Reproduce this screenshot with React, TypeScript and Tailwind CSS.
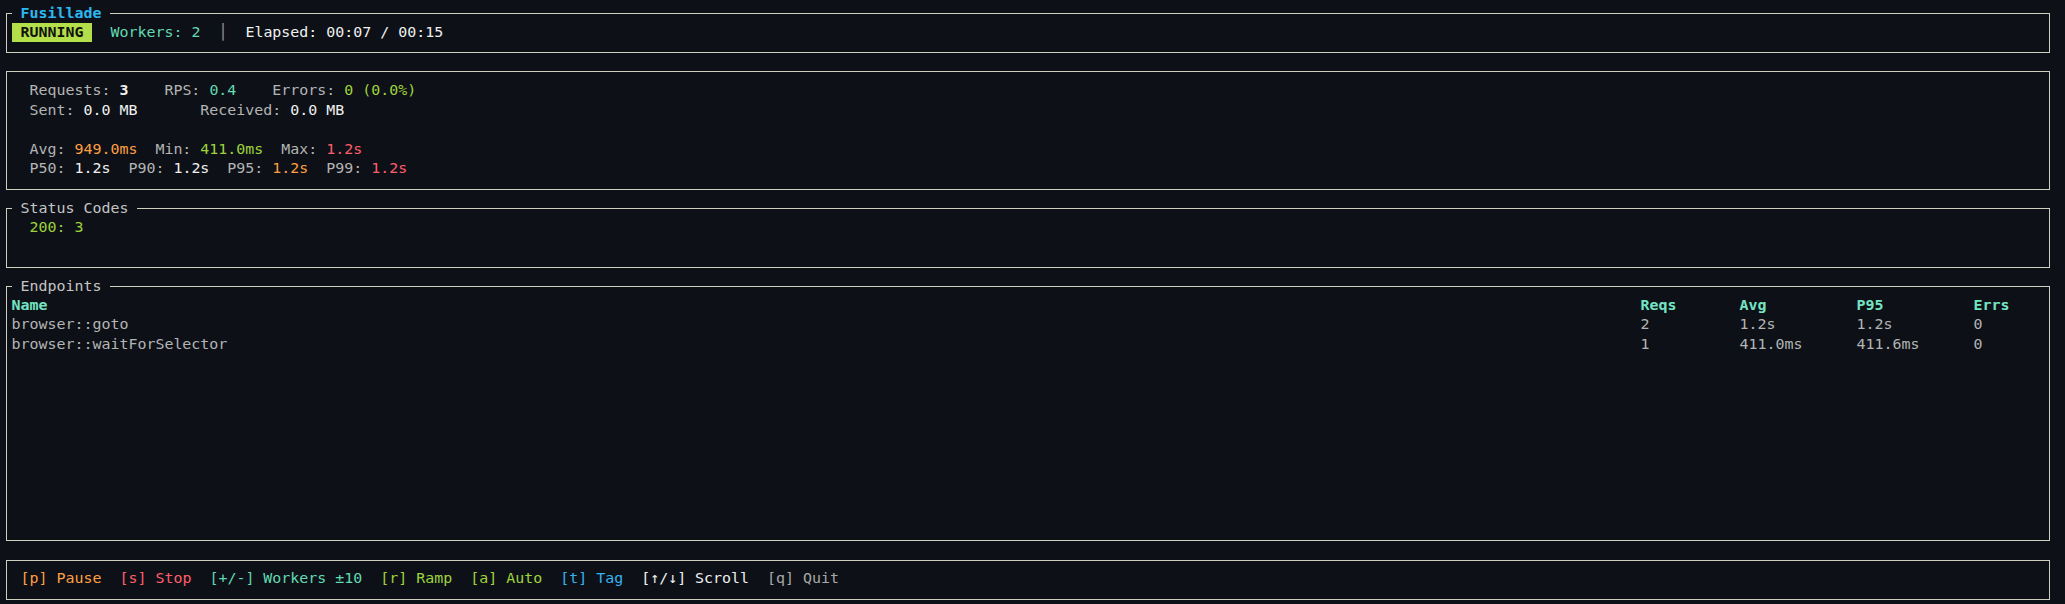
import React from "react";

const ROW = "h-[19.53px] leading-[19.53px] whitespace-pre";

function Box({
  title,
  titleClass,
  heightClass,
  children,
}: {
  title?: string;
  titleClass?: string;
  heightClass: string;
  children?: React.ReactNode;
}) {
  return (
    <div
      className={`relative ml-[6px] w-[2044px] shrink-0 border border-[#cfcfc0] pl-[4.5px] pt-[8.77px] ${heightClass}`}
    >
      {title && (
        <span
          className={`absolute left-[4.5px] top-[-10.27px] h-[19.53px] leading-[19.53px] whitespace-pre bg-[#0d1117] px-[9px] ${titleClass ?? ""}`}
        >
          {title}
        </span>
      )}
      {children}
    </div>
  );
}

const endpoints = [
  { name: "browser::goto", reqs: "2", avg: "1.2s", p95: "1.2s", errs: "0" },
  { name: "browser::waitForSelector", reqs: "1", avg: "411.0ms", p95: "411.6ms", errs: "0" },
];

export default function App() {
  const lbl = "text-[#b4b4b4]";
  const val = "text-[#f0f0f0]";
  const green = "text-[#9fd33c]";
  const orange = "text-[#ff9f43]";
  const red = "text-[#ff5d6a]";
  const teal = "text-[#62d9b2]";
  const blue = "text-[#35b2f0]";
  return (
    <div className="w-[2065px] h-[604px] overflow-hidden bg-[#0d1117] pt-[12.8px] flex flex-col gap-[18.53px] font-['DejaVu_Sans_Mono',monospace] text-[14.95px] text-[#b4b4b4]">
      {/* Header */}
      <Box title="Fusillade" titleClass="font-bold text-[#2db7f2]" heightClass="h-[40.06px]">
        <div className={ROW}>
          <span className="inline-block h-[19.53px] bg-[#b3df4a] font-bold text-[#10130d]"> RUNNING </span>
          <span>  </span>
          <span className={teal}>Workers: 2</span>
          <span>  </span>
          <span className="text-[#9a9a9a]">│</span>
          <span>  </span>
          <span className={val}>Elapsed: 00:07 / 00:15</span>
        </div>
      </Box>

      {/* Stats */}
      <Box heightClass="h-[118.18px]">
        <div className={ROW}>
          <span className={lbl}>  Requests: </span>
          <span className={`${val} font-bold`}>3</span>
          <span className={lbl}>    RPS: </span>
          <span className={teal}>0.4</span>
          <span className={lbl}>    Errors: </span>
          <span className={green}>0 (0.0%)</span>
        </div>
        <div className={ROW}>
          <span className={lbl}>  Sent: </span>
          <span className={val}>0.0 MB</span>
          <span className={lbl}>       Received: </span>
          <span className={val}>0.0 MB</span>
        </div>
        <div className={ROW}> </div>
        <div className={ROW}>
          <span className={lbl}>  Avg: </span>
          <span className={orange}>949.0ms</span>
          <span className={lbl}>  Min: </span>
          <span className={green}>411.0ms</span>
          <span className={lbl}>  Max: </span>
          <span className={red}>1.2s</span>
        </div>
        <div className={ROW}>
          <span className={lbl}>  P50: </span>
          <span className={val}>1.2s</span>
          <span className={lbl}>  P90: </span>
          <span className={val}>1.2s</span>
          <span className={lbl}>  P95: </span>
          <span className={orange}>1.2s</span>
          <span className={lbl}>  P99: </span>
          <span className={red}>1.2s</span>
        </div>
      </Box>

      {/* Status codes */}
      <Box title="Status Codes" titleClass="text-[#c4c4c4]" heightClass="h-[59.59px]">
        <div className={ROW}>
          <span className={green}>  200: 3</span>
        </div>
      </Box>

      {/* Endpoints */}
      <Box title="Endpoints" titleClass="text-[#c4c4c4]" heightClass="h-[254.89px]">
        <div className="grid grid-cols-[1629px_99px_117px_117px_1fr]">
          {["Name", "Reqs", "Avg", "P95", "Errs"].map((h) => (
            <div key={h} className={`${ROW} font-bold text-[#74e4c2]`}>
              {h}
            </div>
          ))}
          {endpoints.map((e) => (
            <React.Fragment key={e.name}>
              <div className={`${ROW} text-[#b4b4b4]`}>{e.name}</div>
              <div className={`${ROW} text-[#b4b4b4]`}>{e.reqs}</div>
              <div className={`${ROW} text-[#b4b4b4]`}>{e.avg}</div>
              <div className={`${ROW} text-[#b4b4b4]`}>{e.p95}</div>
              <div className={`${ROW} text-[#b4b4b4]`}>{e.errs}</div>
            </React.Fragment>
          ))}
        </div>
      </Box>

      {/* Footer */}
      <Box heightClass="h-[40.06px]">
        <div className={ROW}>
          <span> </span>
          <span className={orange}>[p] Pause</span>
          <span>  </span>
          <span className={red}>[s] Stop</span>
          <span>  </span>
          <span className={teal}>[+/-] Workers ±10</span>
          <span>  </span>
          <span className={green}>[r] Ramp</span>
          <span>  </span>
          <span className={green}>[a] Auto</span>
          <span>  </span>
          <span className={blue}>[t] Tag</span>
          <span>  </span>
          <span className={val}>[↑/↓] Scroll</span>
          <span>  </span>
          <span className="text-[#a8a8a8]">[q] Quit</span>
        </div>
      </Box>
    </div>
  );
}
